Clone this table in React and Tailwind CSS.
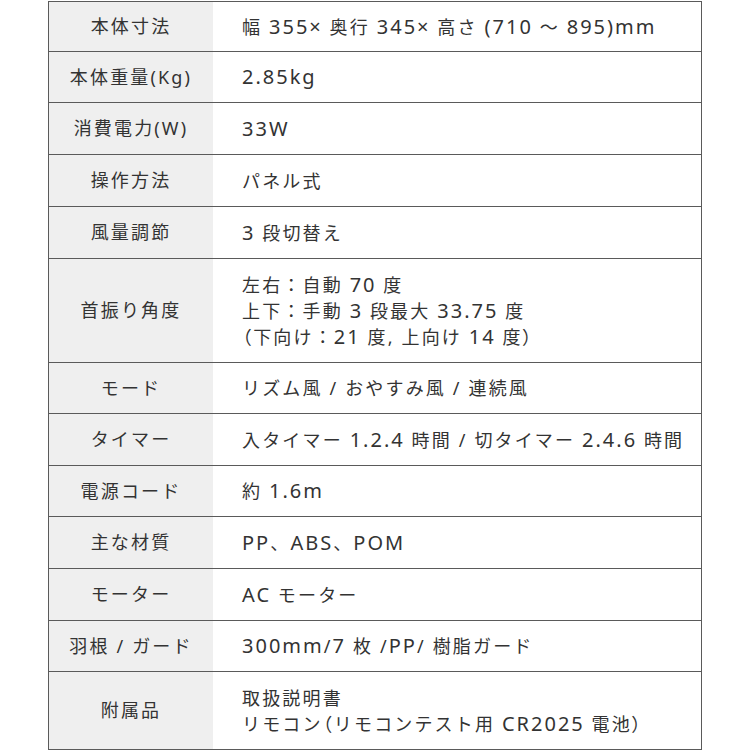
import React from 'react';

const rows = [
  { label: '本体寸法', value: ['幅 355× 奥行 345× 高さ (710 ～ 895)mm'], h: 'h-[50px]' },
  { label: '本体重量(Kg)', value: ['2.85kg'], h: 'h-[51px]' },
  { label: '消費電力(W)', value: ['33W'], h: 'h-[52px]' },
  { label: '操作方法', value: ['パネル式'], h: 'h-[52px]' },
  { label: '風量調節', value: ['3 段切替え'], h: 'h-[52px]' },
  {
    label: '首振り角度',
    value: ['左右：自動 70 度', '上下：手動 3 段最大 33.75 度', '（下向け：21 度, 上向け 14 度）'],
    h: 'h-[104px]',
  },
  { label: 'モード', value: ['リズム風 / おやすみ風 / 連続風'], h: 'h-[51px]' },
  { label: 'タイマー', value: ['入タイマー 1.2.4 時間 / 切タイマー 2.4.6 時間'], h: 'h-[52px]' },
  { label: '電源コード', value: ['約 1.6m'], h: 'h-[51px]' },
  { label: '主な材質', value: ['PP、ABS、POM'], h: 'h-[52px]' },
  { label: 'モーター', value: ['AC モーター'], h: 'h-[52px]' },
  { label: '羽根 / ガード', value: ['300mm/7 枚 /PP/ 樹脂ガード'], h: 'h-[51px]' },
  {
    label: '附属品',
    value: ['取扱説明書', 'リモコン（リモコンテスト用 CR2025 電池）'],
    h: 'h-[77px]',
  },
];

// latin runs in the original are drawn a size larger than the kana/kanji,
// and the full-width brackets sit tight against the text
function Mixed({ text }) {
  const parts = text.split(/([A-Za-z0-9.×()]+|[（）])/);
  return parts.map((p, i) => {
    if (i % 2 === 0) return <span key={i}>{p}</span>;
    if (p === '（' || p === '）')
      return (
        <span key={i} className="[font-feature-settings:'palt']">
          {p}
        </span>
      );
    return (
      <span key={i} className="text-[20px] tracking-[0.1em]">
        {p}
      </span>
    );
  });
}

export default function App() {
  return (
    <div
      className="w-[750px] h-[750px] bg-white pt-px px-12 overflow-hidden"
      style={{ fontFamily: '"Noto Sans", "Noto Sans CJK JP", sans-serif' }}
    >
      <div className="border border-[#5a5a5a] text-[#333] text-[18px]">
        {rows.map((row, i) => (
          <div
            key={i}
            className={`${row.h} flex ${i < rows.length - 1 ? 'border-b border-[#5a5a5a]' : ''}`}
          >
            <div className="w-[164px] shrink-0 bg-[#efefef] flex items-center justify-center tracking-[0.12em]">
              {row.label}
            </div>
            <div className="flex-1 flex flex-col justify-center pl-[29px] leading-[26px] tracking-[0.12em]">
              {row.value.map((line, j) => (
                <div key={j}>
                  <Mixed text={line} />
                </div>
              ))}
            </div>
          </div>
        ))}
      </div>
    </div>
  );
}
